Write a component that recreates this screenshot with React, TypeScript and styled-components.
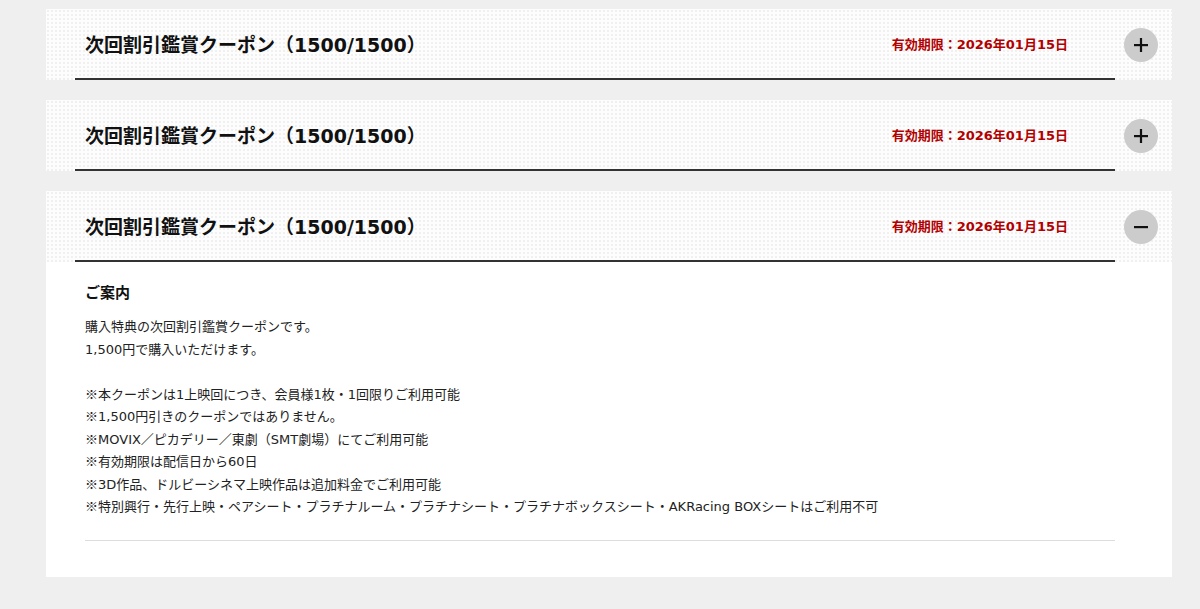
import React from "react";
import styled, { createGlobalStyle } from "styled-components";

const Global = createGlobalStyle`
  html, body { margin: 0; padding: 0; background: #efefef; }
  body { font-family: "DejaVu Sans", "Noto Sans CJK JP", sans-serif; color: #333; }
`;

const Page = styled.div`
  display: flex;
  flex-direction: column;
  gap: 20px;
  padding: 9px 28px 30px 46px;
`;

const Card = styled.section`
  background: #fff;
  width: 1126px;
`;

const HeaderRow = styled.div`
  display: flex;
  align-items: center;
  gap: 9px;
  padding: 0 14px 0 29px;
  background-color: #fdfdfd;
  background-image: radial-gradient(circle, #f0f0f0 0.8px, transparent 1.2px);
  background-size: 4px 4px;
`;

const HeaderMain = styled.div`
  flex: 1;
  height: 69px;
  display: flex;
  align-items: center;
  justify-content: space-between;
  padding: 0 47px 0 10px;
  border-bottom: 2px solid #333;
`;

const Title = styled.h2`
  margin: 0;
  font-size: 19px;
  font-weight: 700;
  color: #111;
`;

const Expiry = styled.span`
  font-size: 13px;
  font-weight: 700;
  color: #b20000;
`;

const Toggle = styled.button`
  width: 34px;
  height: 34px;
  border-radius: 50%;
  border: none;
  background: #cccccc;
  display: flex;
  align-items: center;
  justify-content: center;
  padding: 0;
  cursor: pointer;
  flex-shrink: 0;
`;

const Body = styled.div`
  padding: 20px 57px 36px 39px;
`;

const BodyHeading = styled.h3`
  margin: 0 0 12px;
  font-size: 15px;
  font-weight: 700;
  line-height: 22px;
  color: #111;
`;

const BodyText = styled.p`
  margin: 0;
  font-size: 13px;
  line-height: 22.5px;
  color: #222;
`;

const Mark = styled.span`
  font-family: "Noto Sans CJK JP", sans-serif;
  line-height: 1;
`;

const Divider = styled.hr`
  margin: 21px 0 0;
  border: none;
  border-top: 1px solid #dddddd;
`;

const Sign = ({ open }: { open: boolean }) => (
  <svg width="16" height="16" viewBox="0 0 16 16">
    <rect x="1" y="7" width="14" height="2.2" fill="#111" />
    {!open && <rect x="6.9" y="1" width="2.2" height="14" fill="#111" />}
  </svg>
);

const lines = [
  "購入特典の次回割引鑑賞クーポンです。",
  "1,500円で購入いただけます。",
  "",
  "※本クーポンは1上映回につき、会員様1枚・1回限りご利用可能",
  "※1,500円引きのクーポンではありません。",
  "※MOVIX／ピカデリー／東劇（SMT劇場）にてご利用可能",
  "※有効期限は配信日から60日",
  "※3D作品、ドルビーシネマ上映作品は追加料金でご利用可能",
  "※特別興行・先行上映・ペアシート・プラチナルーム・プラチナシート・プラチナボックスシート・AKRacing BOXシートはご利用不可",
];

const renderLine = (l: string) =>
  l.startsWith("※") ? (
    <>
      <Mark>※</Mark>
      {l.slice(1)}
    </>
  ) : (
    l
  );

const Coupon = ({ open }: { open: boolean }) => (
  <Card>
    <HeaderRow>
      <HeaderMain>
        <Title>次回割引鑑賞クーポン（1500/1500）</Title>
        <Expiry>有効期限：2026年01月15日</Expiry>
      </HeaderMain>
      <Toggle aria-label={open ? "閉じる" : "開く"}>
        <Sign open={open} />
      </Toggle>
    </HeaderRow>
    {open && (
      <Body>
        <BodyHeading>ご案内</BodyHeading>
        <BodyText>
          {lines.map((l, i) => (
            <React.Fragment key={i}>
              {renderLine(l)}
              {i < lines.length - 1 && <br />}
            </React.Fragment>
          ))}
        </BodyText>
        <Divider />
      </Body>
    )}
  </Card>
);

export default function App() {
  return (
    <>
      <Global />
      <Page>
        <Coupon open={false} />
        <Coupon open={false} />
        <Coupon open={true} />
      </Page>
    </>
  );
}
